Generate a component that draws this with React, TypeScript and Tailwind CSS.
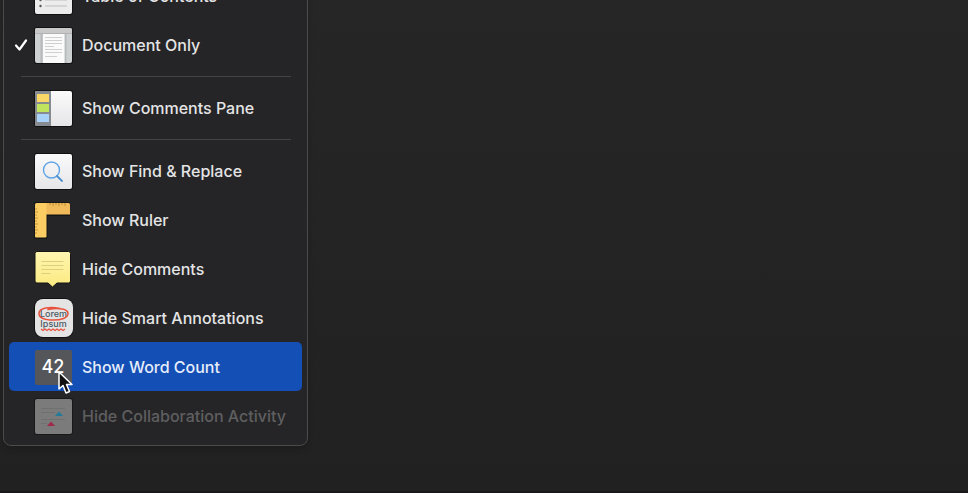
import type { ReactNode } from 'react';

const TocIcon = () => (
  <svg viewBox="0 0 40 40" className="size-10 shrink-0" aria-hidden="true">
    <rect x="1" y="2" width="39" height="37" rx="3" fill="#111" />
    <rect x="2" y="3" width="37" height="35" rx="2" fill="#ececec" />
    <g fill="#555">
      <circle cx="7.5" cy="18" r="1.2" />
      <circle cx="7.5" cy="24" r="1.2" />
      <circle cx="7.5" cy="30" r="1.2" />
    </g>
    <path d="M12 18h22M12 24h22M12 30h22" stroke="#bdbdbd" />
  </svg>
);

const DocumentIcon = () => (
  <svg viewBox="0 0 40 40" className="size-10 shrink-0" aria-hidden="true">
    <rect x="1" y="2" width="39" height="37" rx="3" fill="#111" />
    <rect x="2" y="3" width="37" height="35" rx="2" fill="#ced1d2" />
    <path d="M2 8V5a2 2 0 0 1 2-2h33a2 2 0 0 1 2 2v3z" fill="#c8c8c8" />
    <path d="M2 8.5h37" stroke="#b2b2b2" />
    <path d="M8.5 9v29M32.5 9v29" stroke="#b6babc" strokeWidth="2" />
    <rect x="10" y="9" width="21.500" height="29" fill="#fafafa" />
    <path
      d="M12 12.5h17M12 15.500h17M12 18.500h17M12 21.500h9M12 24.500h17M12 27.500h17M12 31.500h12"
      stroke="#d0d0d0"
    />
  </svg>
);

const CommentsPaneIcon = () => (
  <svg viewBox="0 0 40 40" className="size-10 shrink-0" aria-hidden="true">
    <defs>
      <linearGradient id="pane" x1="0" y1="0" x2="0" y2="1">
        <stop offset="0" stopColor="#fafafb" />
        <stop offset="1" stopColor="#e6e6e8" />
      </linearGradient>
    </defs>
    <rect x="1" y="2" width="39" height="37" rx="3" fill="#111" />
    <rect x="2" y="3" width="37" height="35" rx="2" fill="url(#pane)" />
    <path d="M18 3H4a2 2 0 0 0-2 2v31a2 2 0 0 0 2 2h14z" fill="#858b90" />
    <rect x="4" y="6" width="12" height="8" fill="#fbd768" />
    <rect x="4" y="16" width="12" height="8" fill="#c0e45d" />
    <rect x="4" y="26" width="12" height="8" fill="#a9d2fb" />
  </svg>
);

const FindIcon = () => (
  <svg viewBox="0 0 40 40" className="size-10 shrink-0" aria-hidden="true">
    <rect x="1" y="2" width="39" height="37" rx="3" fill="#111" />
    <rect x="2" y="3" width="37" height="35" rx="2" fill="url(#pane)" />
    <circle cx="18.500" cy="19" r="8" fill="none" stroke="#62a5e6" strokeWidth="1.400" />
    <path d="M24 25l5 5" stroke="#4b8fd0" strokeWidth="1.800" strokeLinecap="round" />
  </svg>
);

const RulerIcon = () => (
  <svg viewBox="0 0 40 40" className="size-10 shrink-0" aria-hidden="true">
    <path d="M1 4a2 2 0 0 1 2-2h32a2 2 0 0 1 2 2v12H14.500v21a2 2 0 0 1-2 2H3a2 2 0 0 1-2-2z" fill="#151515" />
    <path d="M13 3h22.500A1.500 1.500 0 0 1 37 4.500V14.500H13z" fill="#f0b95a" />
    <path d="M2 4.500A1.500 1.500 0 0 1 3.500 3H13.500v33.500a1 1 0 0 1-1 1H3a1 1 0 0 1-1-1z" fill="#fbcd62" />
    <path
      d="M17 3v2M20 3v3M23 3v2M26 3v3M29 3v2M32 3v3M2 9h2M2 12h3M2 15h2M2 18h3M2 21h2M2 24h3M2 27h2M2 30h3M2 33h2"
      stroke="#a97b2d"
      strokeWidth=".7"
    />
  </svg>
);

const NoteIcon = () => (
  <svg viewBox="0 0 40 40" className="size-10 shrink-0" aria-hidden="true">
    <defs>
      <linearGradient id="note" x1="0" y1="0" x2="0" y2="1">
        <stop offset="0" stopColor="#fff5b0" />
        <stop offset="1" stopColor="#fbea80" />
      </linearGradient>
    </defs>
    <path
      d="M4 2.500h31.500a2 2 0 0 1 2 2V32a2 2 0 0 1-2 2H24l-4.500 4L15 34H4a2 2 0 0 1-2-2V4.500a2 2 0 0 1 2-2z"
      fill="url(#note)"
      stroke="#151515"
    />
    <path d="M8.500 12.500h22M8.500 16.500h22M8.500 20.500h22M8.500 24.500h9" stroke="#dccf80" />
  </svg>
);

const AnnotationsIcon = () => (
  <svg viewBox="0 0 40 40" className="size-10 shrink-0" aria-hidden="true">
    <rect x="1" y="0" width="40" height="40" rx="9" fill="#111" />
    <rect x="2" y="1" width="38" height="38" rx="8" fill="#e4e4e4" />
    <g fontSize="9" fontWeight="500" fill="#4b5a63" textAnchor="middle" className="font-['Inter',sans-serif]">
      <text x="20.500" y="19">Lorem</text>
      <text x="20.500" y="29">Ipsum</text>
    </g>
    <path
      d="M27 10.500C17 8 6 10 6 15.500S13 22 20.500 22 35 20 35 15.500 26 9.500 15 11.500"
      fill="none"
      stroke="#e8513c"
      strokeWidth="1.500"
      strokeLinecap="round"
    />
    <path
      d="M8 31l2 1.500 2-1.500 2 1.500 2-1.500 2 1.500 2-1.500 2 1.500 2-1.500 2 1.500 2-1.500 2 1.500 2-1.500"
      fill="none"
      stroke="#e8513c"
      strokeWidth="1.200"
    />
  </svg>
);

const WordCountIcon = () => (
  <svg viewBox="0 0 40 40" className="size-10 shrink-0" aria-hidden="true">
    <rect x="2" y="3" width="37" height="35" rx="2" fill="#55565a" />
    <text x="20" y="26" textAnchor="middle" fontSize="18" fontWeight="500" fill="#fff" className="font-['Inter',sans-serif]">
      42
    </text>
  </svg>
);

const ActivityIcon = () => (
  <svg viewBox="0 0 40 40" className="size-10 shrink-0" aria-hidden="true">
    <rect x="1" y="2" width="39" height="37" rx="3" fill="#181818" />
    <rect x="2" y="3" width="37" height="35" rx="2" fill="#7b7b7b" />
    <path d="M8 12.500h24M8 16.500h14M8 23.500h24M8 27.500h6" stroke="#707070" />
    <path d="M22 20l4-4.500 4 4.500z" fill="#247a99" />
    <path d="M14 30l4-4.500 4 4.500z" fill="#a02848" />
  </svg>
);

const Pointer = () => (
  <svg viewBox="0 0 18 26" className="absolute left-12 top-7 h-[26px] w-[18px]" aria-hidden="true">
    <path
      d="M2 2v17l4-3.500 3 7.500 3.500-1.500-3-7H15z"
      fill="#111"
      stroke="#fff"
      strokeWidth="1.500"
      strokeLinejoin="round"
    />
  </svg>
);

type ItemProps = {
  icon: ReactNode;
  label: string;
  checked?: boolean;
  active?: boolean;
  disabled?: boolean;
};

const MenuItem = ({ icon, label, checked, active, disabled }: ItemProps) => (
  <button
    type="button"
    role={checked ? 'menuitemradio' : 'menuitem'}
    aria-checked={checked}
    disabled={disabled}
    className={`relative flex h-[49px] w-full items-center rounded-[5px] text-left text-base font-medium ${
      active ? 'bg-[#144fb5] text-[#e6edfa]' : 'text-[#e4e4e5] disabled:text-[#5f5f60]'
    }`}
  >
    <span className="flex w-6 shrink-0 justify-center">
      {checked && (
        <svg viewBox="0 0 14 14" className="size-[14px]" aria-hidden="true">
          <path d="M2 7.500l3.500 4L12 2.500" fill="none" stroke="#fff" strokeWidth="2.200" strokeLinecap="round" strokeLinejoin="round" />
        </svg>
      )}
    </span>
    {icon}
    <span className="ml-[9px] whitespace-nowrap">{label}</span>
    {active && <Pointer />}
  </button>
);

const Separator = () => (
  <div role="separator" className="flex h-[14px] items-center pl-3 pr-[11px]">
    <div className="h-px w-full bg-[#454547]" />
  </div>
);

const App = () => {
  return (
    <main className="min-h-screen overflow-hidden border-b-2 border-[#191719] bg-linear-to-b from-[#262626] to-[#212121] font-['Inter',sans-serif]">
      <div
        role="menu"
        aria-label="View"
        className="-mt-[35px] ml-[3px] w-[305px] rounded-lg border border-[#4b4b4c] bg-[#252527] p-[5px] shadow-md"
      >
        <MenuItem icon={<TocIcon />} label="Table of Contents" />
        <MenuItem icon={<DocumentIcon />} label="Document Only" checked />
        <Separator />
        <MenuItem icon={<CommentsPaneIcon />} label="Show Comments Pane" />
        <Separator />
        <MenuItem icon={<FindIcon />} label="Show Find &amp; Replace" />
        <MenuItem icon={<RulerIcon />} label="Show Ruler" />
        <MenuItem icon={<NoteIcon />} label="Hide Comments" />
        <MenuItem icon={<AnnotationsIcon />} label="Hide Smart Annotations" />
        <MenuItem icon={<WordCountIcon />} label="Show Word Count" active />
        <MenuItem icon={<ActivityIcon />} label="Hide Collaboration Activity" disabled />
      </div>
    </main>
  );
};

export default App;
